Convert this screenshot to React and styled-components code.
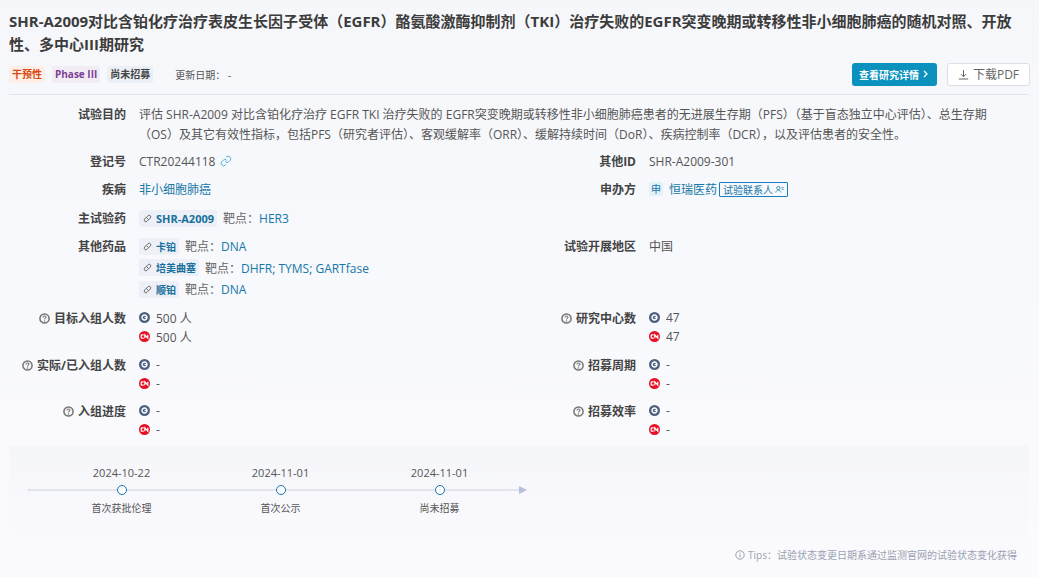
import React from "react";
import styled, { createGlobalStyle } from "styled-components";

const GlobalStyle = createGlobalStyle`
  html, body {
    margin: 0;
    height: 100%;
    background: #f9fafd;
  }
  body {
    font-family: "Open Sans", "Noto Sans CJK SC", sans-serif;
    font-size: 12px;
    color: #555;
    overflow: hidden;
  }
`;

const Page = styled.div`
  width: 1039px;
  height: 577px;
  box-sizing: border-box;
  padding: 10px 10px 0 9px;
  background: linear-gradient(180deg, #f6f7fb 0%, #f8f9fc 50%, #fbfbfe 100%);
`;

const Title = styled.h1`
  margin: 0;
  font-size: 15px;
  line-height: 23px;
  font-weight: 700;
  color: #3c3c3c;
  width: 1020px;
`;

const MetaBar = styled.div`
  display: flex;
  align-items: center;
  justify-content: space-between;
  height: 24px;
  margin-top: 6px;
  padding-bottom: 8px;
  border-bottom: 1px solid #dfe4f0;
`;

const Tags = styled.div`
  display: flex;
  align-items: center;
  gap: 7px;
`;

const Tag = styled.span`
  height: 17px;
  line-height: 17px;
  padding: 0 3px;
  border-radius: 2px;
  font-size: 10px;
  font-weight: 700;
  color: ${(p) => p.$color};
  background: ${(p) => p.$bg};
`;

const UpdateDate = styled.span`
  margin-left: 15px;
  font-size: 10px;
  color: #555;
`;

const Actions = styled.div`
  display: flex;
  align-items: center;
  gap: 10px;
  margin-right: -1px;
`;

const DetailButton = styled.button`
  display: flex;
  align-items: center;
  gap: 3px;
  height: 23px;
  width: 85px;
  padding: 0 0 0 7px;
  border: 0;
  border-radius: 3px;
  background: #0a91bd;
  color: #fff;
  font: 700 10px "Open Sans", "Noto Sans CJK SC", sans-serif;
`;

const PdfButton = styled.button`
  display: flex;
  align-items: center;
  justify-content: center;
  gap: 4px;
  height: 23px;
  width: 83px;
  padding: 0;
  border: 1px solid #dcdfe6;
  border-radius: 3px;
  background: #fff;
  color: #666;
  font: 400 12px "Open Sans", "Noto Sans CJK SC", sans-serif;
`;

const Purpose = styled.div`
  display: grid;
  grid-template-columns: 117px 860px;
  column-gap: 13px;
  margin-top: 10px;
  line-height: 20px;
`;

const Label = styled.div`
  display: flex;
  align-items: center;
  justify-content: flex-end;
  gap: 4px;
  height: 20px;
  font-weight: 700;
  color: #444;
  white-space: nowrap;
`;

const Text = styled.div`
  color: #555;
  line-height: 20px;
`;

const Link = styled.span`
  color: #1677a8;
`;

const Row = styled.div`
  display: grid;
  grid-template-columns: 117px 367px 117px 1fr;
  column-gap: 13px;
  margin-top: ${(p) => p.$top}px;
`;

const Stack = styled.div`
  display: flex;
  flex-direction: column;
  gap: ${(p) => p.$gap || 0}px;
`;

const Inline = styled.div`
  display: flex;
  align-items: center;
  gap: ${(p) => p.$gap || 0}px;
  height: 20px;
  white-space: nowrap;
`;

const Drug = styled.span`
  display: inline-flex;
  align-items: center;
  gap: 4px;
  height: 17px;
  padding: 0 3px 0 4px;
  border-radius: 2px;
  background: #edf0f7;
  font-size: ${(p) => (p.$latin ? 11 : 10)}px;
  font-weight: 700;
  color: #176f9c;
`;

const TargetLabel = styled.span`
  color: #666;
`;

const SponsorBadge = styled.span`
  width: 14px;
  height: 14px;
  line-height: 14px;
  text-align: center;
  background: #e3f1f8;
  color: #1677a8;
  font-size: 10px;
  border-radius: 1px;
`;

const Contact = styled.span`
  display: inline-flex;
  align-items: center;
  gap: 2px;
  height: 13px;
  margin-left: -4px;
  padding: 0 3px;
  border: 1px solid #1a7fc0;
  border-radius: 1px;
  font-size: 10px;
  color: #1677a8;
`;

const Region = styled.span`
  display: flex;
  align-items: center;
  justify-content: center;
  width: 11px;
  height: 11px;
  border-radius: 50%;
  background: ${(p) => (p.$cn ? "#e60f24" : "#4f6180")};
`;

const RegionRow = styled.div`
  display: flex;
  align-items: center;
  gap: 6px;
  height: 19px;
  color: #555;
`;

const Panel = styled.section`
  position: relative;
  box-sizing: border-box;
  height: 122px;
  margin-top: 7px;
  padding: 18px 0 0 19px;
  border-radius: 4px;
  background: linear-gradient(180deg, #f5f6fa 0%, #f9f9fd 55%, #fbfbfe 100%);
`;

const Timeline = styled.div`
  position: relative;
  width: 498px;
  display: grid;
  grid-template-columns: repeat(3, 159px);
  padding-left: 14px;
  box-sizing: border-box;
`;

const Track = styled.div`
  position: absolute;
  left: 0;
  right: 6px;
  top: 25px;
  height: 2px;
  background: #e2e5ee;
  border-left: 1px solid #d4d8e4;
  &::after {
    content: "";
    position: absolute;
    right: -7px;
    top: -3px;
    border-left: 8px solid #b6c0d8;
    border-top: 4px solid transparent;
    border-bottom: 4px solid transparent;
  }
`;

const Step = styled.div`
  position: relative;
  width: 159px;
  display: flex;
  flex-direction: column;
  align-items: center;
  font-size: 10px;
  line-height: 18px;
  color: #555;
`;

const StepDate = styled.span`
  font-size: 11px;
`;

const Dot = styled.span`
  width: 8px;
  height: 8px;
  box-sizing: content-box;
  border: 1px solid #1677a8;
  border-radius: 50%;
  background: #fff;
  margin: 3px 0 4px;
`;

const Tips = styled.div`
  position: absolute;
  right: 12px;
  bottom: 5px;
  display: flex;
  align-items: center;
  gap: 3px;
  font-size: 10px;
  line-height: 16px;
  color: #9aa1b1;
`;

const HelpIcon = () => (
  <svg width="11" height="11" viewBox="0 0 12 12" fill="none">
    <circle cx="6" cy="6" r="5" stroke="#777" strokeWidth="1.7" />
    <path d="M4.400 4.800C4.400 3.800 5.100 3.300 6 3.300s1.600.6 1.600 1.400c0 1.100-1.600 1.200-1.600 2.300" stroke="#777" strokeWidth="1.200" />
    <circle cx="6" cy="8.700" r=".8" fill="#777" />
  </svg>
);

const PillIcon = () => (
  <svg width="9" height="9" viewBox="0 0 10 10" fill="none" stroke="#666" strokeWidth="1">
    <rect x="0.6" y="3.2" width="8.8" height="3.6" rx="1.8" transform="rotate(-45 5 5)" />
    <path d="M3.700 3.700l2.600 2.600" />
  </svg>
);

const GlobalFlag = () => (
  <Region>
    <svg width="9" height="9" viewBox="0 0 8 8" fill="none">
      <circle cx="4" cy="4" r="2.200" stroke="#fff" strokeWidth="1.200" />
      <path d="M4 4h2.400" stroke="#fff" strokeWidth="1" />
    </svg>
  </Region>
);

const CnFlag = () => (
  <Region $cn>
    <svg width="11" height="11" viewBox="0 0 10 10" fill="none" stroke="#fff" strokeWidth="1.100">
      <path d="M4.300 3.600H2.600a.6.6 0 0 0-.6.6v1.600c0 .3.3.6.6.6h1.700" />
      <path d="M5.300 6.600V3.500L8 6.500V3.400" />
    </svg>
  </Region>
);

const Metric = ({ value, cnValue }) => (
  <Stack>
    <RegionRow>
      <GlobalFlag />
      {value}
    </RegionRow>
    <RegionRow>
      <CnFlag />
      {cnValue}
    </RegionRow>
  </Stack>
);

const Help = ({ children }) => (
  <Label>
    <HelpIcon />
    {children}
  </Label>
);

const DrugRow = ({ name, targets, latin }) => (
  <Inline $gap={6}>
    <Drug $latin={latin}>
      <PillIcon />
      {name}
    </Drug>
    <span>
      <TargetLabel>靶点：</TargetLabel>
      <Link>{targets}</Link>
    </span>
  </Inline>
);

const steps = [
  { date: "2024-10-22", name: "首次获批伦理" },
  { date: "2024-11-01", name: "首次公示" },
  { date: "2024-11-01", name: "尚未招募" },
];

export default function App() {
  return (
    <Page>
      <GlobalStyle />
      <Title>
        SHR-A2009对比含铂化疗治疗表皮生长因子受体（EGFR）酪氨酸激酶抑制剂（TKI）治疗失败的EGFR突变晚期或转移性非小细胞肺癌的随机对照、开放性、多中心III期研究
      </Title>
      <MetaBar>
        <Tags>
          <Tag $color="#d9480f" $bg="#fdeee8">干预性</Tag>
          <Tag $color="#7a3f95" $bg="#f2edf5">Phase III</Tag>
          <Tag $color="#444" $bg="#ebeff6">尚未招募</Tag>
          <UpdateDate>更新日期： -</UpdateDate>
        </Tags>
        <Actions>
          <DetailButton>
            查看研究详情
            <svg width="7" height="8" viewBox="0 0 7 8" fill="none" stroke="#fff" strokeWidth="1.300">
              <path d="M2 1l3 3-3 3" />
            </svg>
          </DetailButton>
          <PdfButton>
            <svg width="11" height="11" viewBox="0 0 11 11" fill="none" stroke="#666" strokeWidth="1">
              <path d="M5.500 1v6.500M3 5.200l2.500 2.500L8 5.200M.8 10h9.400" />
            </svg>
            下载PDF
          </PdfButton>
        </Actions>
      </MetaBar>

      <Purpose>
        <Label>试验目的</Label>
        <Text>
          评估 SHR-A2009 对比含铂化疗治疗 EGFR TKI 治疗失败的 EGFR突变晚期或转移性非小细胞肺癌患者的无进展生存期（PFS）（基于盲态独立中心评估）、总生存期（OS）及其它有效性指标，包括PFS（研究者评估）、客观缓解率（ORR）、缓解持续时间（DoR）、疾病控制率（DCR），以及评估患者的安全性。
        </Text>
      </Purpose>

      <Row $top={6}>
        <Label>登记号</Label>
        <Inline $gap={5}>
          CTR20244118
          <svg width="12" height="12" viewBox="0 0 24 24" fill="none" stroke="#4fb3d9" strokeWidth="2">
            <path d="M10 13a5 5 0 0 0 7.500.5l3-3a5 5 0 0 0-7-7l-1.700 1.700" />
            <path d="M14 11a5 5 0 0 0-7.500-.5l-3 3a5 5 0 0 0 7 7l1.700-1.700" />
          </svg>
        </Inline>
        <Label>其他ID</Label>
        <Inline>SHR-A2009-301</Inline>
      </Row>

      <Row $top={8}>
        <Label>疾病</Label>
        <Inline><Link>非小细胞肺癌</Link></Inline>
        <Label>申办方</Label>
        <Inline $gap={6}>
          <SponsorBadge>申</SponsorBadge>
          <Link>恒瑞医药</Link>
          <Contact>
            试验联系人
            <svg width="9" height="9" viewBox="0 0 12 12" fill="none" stroke="#1677a8" strokeWidth="1">
              <circle cx="4.500" cy="4" r="2.200" />
              <path d="M1 10c.4-2 1.800-3 3.500-3S7.600 8 8 10M8.500 3.500h3M9 5.800h2.500" />
            </svg>
          </Contact>
        </Inline>
      </Row>

      <Row $top={9}>
        <Label>主试验药</Label>
        <DrugRow name="SHR-A2009" targets="HER3" latin />
      </Row>

      <Row $top={8}>
        <Label>其他药品</Label>
        <Stack $gap={1.5}>
          <DrugRow name="卡铂" targets="DNA" />
          <DrugRow name="培美曲塞" targets="DHFR; TYMS; GARTfase" />
          <DrugRow name="顺铂" targets="DNA" />
        </Stack>
        <Label>试验开展地区</Label>
        <Inline>中国</Inline>
      </Row>

      <Row $top={9}>
        <Help>目标入组人数</Help>
        <Metric value="500 人" cnValue="500 人" />
        <Help>研究中心数</Help>
        <Metric value="47" cnValue="47" />
      </Row>

      <Row $top={9}>
        <Help>实际/已入组人数</Help>
        <Metric value="-" cnValue="-" />
        <Help>招募周期</Help>
        <Metric value="-" cnValue="-" />
      </Row>

      <Row $top={8}>
        <Help>入组进度</Help>
        <Metric value="-" cnValue="-" />
        <Help>招募效率</Help>
        <Metric value="-" cnValue="-" />
      </Row>

      <Panel>
        <Timeline>
          <Track />
          {steps.map((s, i) => (
            <Step key={i}>
              <StepDate>{s.date}</StepDate>
              <Dot />
              {s.name}
            </Step>
          ))}
        </Timeline>
        <Tips>
          <svg width="10" height="10" viewBox="0 0 10 10" fill="none" stroke="#9aa1b1" strokeWidth="1">
            <circle cx="5" cy="5" r="4.200" />
            <path d="M5 4.300v3M5 2.500v1" />
          </svg>
          Tips：试验状态变更日期系通过监测官网的试验状态变化获得
        </Tips>
      </Panel>
    </Page>
  );
}
